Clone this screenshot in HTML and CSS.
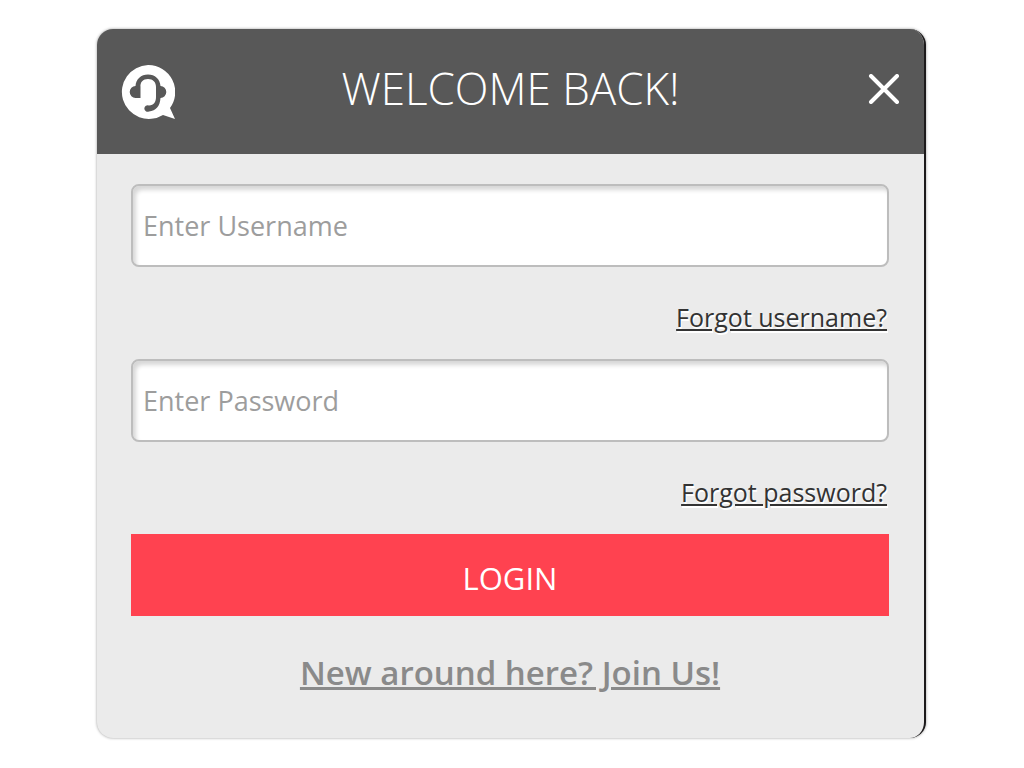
FILE: index.html
```html
<!DOCTYPE html>
<html lang="en">
<head>
	<meta charset="utf-8">
	<meta name="viewport" content="width=device-width, initial-scale=1">
	<title>Login</title>
	<link rel="stylesheet" href="styles.css">
</head>
<body>
	<main class="login-panel">
		<header class="panel-header">
			<button class="icon-button" type="button" aria-label="Support chat">
				<svg width="54" height="54" viewBox="0 0 54 54">
					<path fill="#fff" d="M27 0A27 27 0 0 1 49 43L54 54L42 50A27 27 0 1 1 27 0z"/>
					<path fill="#585858" d="M19.500 33H14.500A5.800 6 0 0 1 14.500 21C15 14 20 9.500 27 9.500S39 14 39.500 21A5.800 6 0 0 1 39.500 33C39 41 35 46 28 46.500A3.300 3.300 0 1 1 28 40.500C33 40 35 37 35 32V22C35 17 32 14 27 14S19 17 19.500 22z"/>
				</svg>
			</button>
			<h1>WELCOME BACK!</h1>
			<button class="icon-button close" type="button" aria-label="Close">
				<svg width="32" height="30" viewBox="0 0 32 30" fill="none" stroke="#fff" stroke-width="4" stroke-linecap="round">
					<path d="M3 2L29 28M29 2L3 28"/>
				</svg>
			</button>
		</header>
		<form class="login-form">
			<input class="field" type="text" name="username" placeholder="Enter Username" aria-label="Username">
			<div class="forgot"><a href="#">Forgot username?</a></div>
			<input class="field" type="password" name="password" placeholder="Enter Password" aria-label="Password">
			<div class="forgot"><a href="#">Forgot password?</a></div>
			<button class="login-button" type="submit">LOGIN</button>
			<div class="join"><a href="#">New around here? Join Us!</a></div>
		</form>
	</main>
</body>
</html>
```
FILE: styles.css
```css
* {
	box-sizing: border-box;
}
body {
	margin: 0;
	padding: 29px 98px 29px 97px;
	background: #fff;
	font-family: "Open Sans", "Noto Sans", sans-serif;
}
.login-panel {
	overflow: hidden;
	border-right: 2px solid #1c1a1b;
	border-radius: 16px;
	background: #ebebeb;
	box-shadow: 0 0 3px rgba(0, 0, 0, 0.4);
}

.panel-header {
	display: grid;
	grid-template-columns: 54px 1fr 54px;
	align-items: center;
	padding: 27px 24px 33px;
	background: #585858;
}
.panel-header h1 {
	margin: 0;
	color: #fff;
	font-size: 44px;
	font-weight: 300;
	line-height: 65px;
	text-align: center;
}
.icon-button {
	padding: 6px 0 0;
	border: 0;
	background: none;
	cursor: pointer;
}
.icon-button svg {
	display: block;
}
.close {
	justify-self: end;
	padding: 0;
}

.login-form {
	padding: 30px 35px 40px 34px;
}
.field {
	display: block;
	width: 100%;
	height: 83px;
	padding: 0 10px;
	border: 2px solid #bdbdbd;
	border-radius: 8px;
	background: #fff;
	box-shadow: inset 3px 4px 4px rgba(0, 0, 0, 0.16);
	color: #333;
	font-family: inherit;
	font-size: 27px;
}
.field::placeholder {
	color: #9d9d9d;
	opacity: 1;
}
.forgot {
	padding: 32px 2px 24px;
	font-size: 25px;
	line-height: 36px;
	text-align: right;
}
.forgot a {
	color: #333;
	text-shadow: 1px 2px 0 #fff;
}
.login-button {
	display: block;
	width: 100%;
	height: 82px;
	padding: 5px 0 0;
	border: 0;
	background: #ff4250;
	color: #fff;
	font-family: inherit;
	font-size: 31px;
	cursor: pointer;
}
.join {
	padding-top: 32px;
	font-size: 33px;
	font-weight: 600;
	line-height: 50px;
	text-align: center;
}
.join a {
	color: #8a8a8a;
}
```
